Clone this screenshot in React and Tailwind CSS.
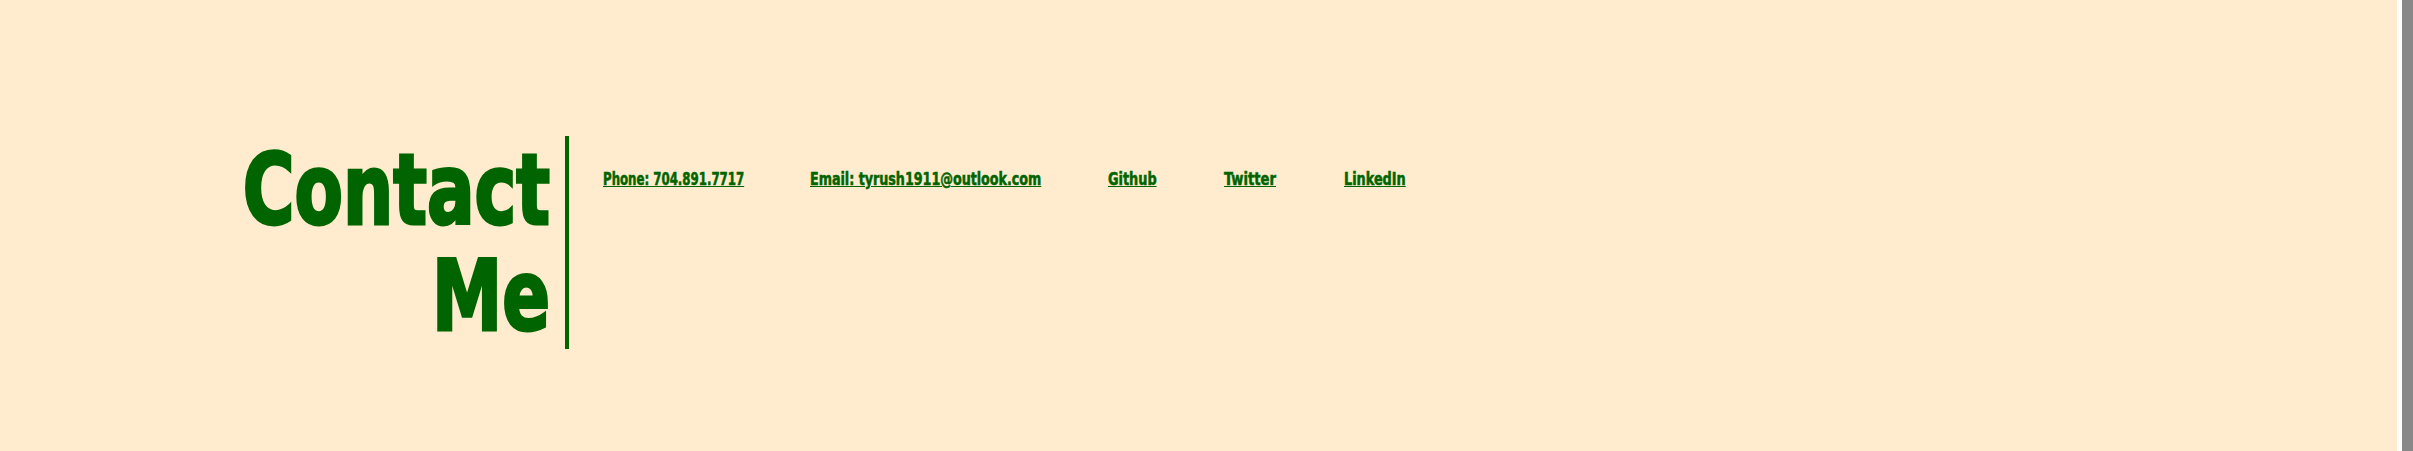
import React from 'react';

const links = [
  { label: 'Phone: 704.891.7717', href: 'tel:7048917717', box: 'w-[140px]', squeeze: 'scale-x-[0.77]' },
  { label: 'Email: tyrush1911@outlook.com', href: 'mailto:tyrush1911@outlook.com', box: 'w-[231px]', squeeze: 'scale-x-[0.83]' },
  { label: 'Github', href: '#', box: 'w-[49px]', squeeze: 'scale-x-[0.84]' },
  { label: 'Twitter', href: '#', box: 'w-[53px]', squeeze: 'scale-x-[0.86]' },
  { label: 'LinkedIn', href: '#', box: 'w-[63px]', squeeze: 'scale-x-[0.84]' },
];

// no Impact in the sandbox, so squeeze the condensed fallback
const impact = { fontFamily: 'Impact, "DejaVu Sans Condensed", "Liberation Sans", sans-serif' };

export default function App() {
  return (
    <div className="flex h-[451px] w-full overflow-hidden bg-[#ffebcd]">
      <main className="flex flex-1 items-start pt-[136px]">
        <div className="flex">
          <div className="w-[565px] pr-[15px] pt-[1px]">
            <h1
              style={impact}
              className="origin-right scale-x-[0.8] text-right text-[98px] font-bold leading-[106px] text-[#006400] [-webkit-text-stroke:3px_#006400]"
            >
              Contact
              <br />
              Me
            </h1>
          </div>
          <div className="w-1 bg-[#006400]" />
        </div>
        <nav className="flex gap-[67px] pl-[34px] pt-[31px]">
          {links.map((link) => (
            <div key={link.label} className={link.box}>
              <a
                href={link.href}
                style={impact}
                className={`inline-block origin-left ${link.squeeze} whitespace-nowrap text-[17px] font-bold leading-5 text-[#006400] underline [-webkit-text-stroke:0.5px_#006400]`}
              >
                {link.label}
              </a>
            </div>
          ))}
        </nav>
      </main>
      <div className="flex w-4 shrink-0">
        <div className="w-[5px] bg-white" />
        <div className="flex-1 bg-[#888888]" />
      </div>
    </div>
  );
}
